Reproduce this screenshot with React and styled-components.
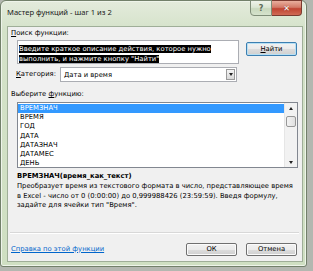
import styled, { createGlobalStyle } from 'styled-components';

const Global = createGlobalStyle`
  html, body {
    margin: 0;
    padding: 0;
    background: #b3b7b0;
  }
  body {
    font-family: "DejaVu Sans", Verdana, sans-serif;
    font-size: 6.8px;
    color: #000;
  }
`

const items = ['ВРЕМЗНАЧ', 'ВРЕМЯ', 'ГОД', 'ДАТА', 'ДАТАЗНАЧ', 'ДАТАМЕС', 'ДЕНЬ']

const App = () => {
  return (<>
    <Global />
    <Window>
      <TitleBar>
        <Title>Мастер функций - шаг 1 из 2</Title>
        <Caption>
          <CapButton>?</CapButton>
          <CapButton $close>✕</CapButton>
        </Caption>
      </TitleBar>
      <Client>
        <Label><u>П</u>оиск функции:</Label>
        <SearchRow>
          <SearchBox>
            <Sel>Введите краткое описание действия, которое нужно </Sel><br />
            <Sel>выполнить, и нажмите кнопку "Найти"</Sel>
          </SearchBox>
          <Button $focused $top={2}><u>Н</u>айти</Button>
        </SearchRow>
        <CategoryRow>
          <CatLabel><u>К</u>атегория:</CatLabel>
          <Select>
            <SelectText>Дата и время</SelectText>
            <DropBtn><Tri $down /></DropBtn>
          </Select>
        </CategoryRow>
        <Label $top={8}>Выберите <u>ф</u>ункцию:</Label>
        <ListBox>
          <Items>
            {items.map((it, i) => (
              <Item key={it} $selected={i === 0}>{it}</Item>
            ))}
          </Items>
          <Scroll>
            <ArrowBox><Tri /></ArrowBox>
            <Thumb />
            <Track />
            <ArrowBox><Tri $down /></ArrowBox>
          </Scroll>
        </ListBox>
        <Signature>ВРЕМЗНАЧ(время_как_текст)</Signature>
        <Desc>
          Преобразует время из текстового формата в число, представляющее время<br />
          в Excel - число от 0 (0:00:00) до 0,999988426 (23:59:59). Введя формулу,<br />
          задайте для ячейки тип "Время".
        </Desc>
        <Separator />
        <Footer>
          <HelpLink>Справка по этой функции</HelpLink>
          <Buttons>
            <Button>ОК</Button>
            <Button>Отмена</Button>
          </Buttons>
        </Footer>
      </Client>
    </Window>
  </>);
}

const Window = styled.div`
  width: 307px;
  height: 267px;
  box-sizing: border-box;
  border: 1px solid #72806a;
  border-radius: 6px 6px 3px 3px;
  background: linear-gradient(180deg, #e3ebdc 0px, #d4e2c9 30px, #cfdfc2 100%);
  padding: 0 3px 4px 6px;
  display: flex;
  flex-direction: column;
  box-shadow: inset 0 0 0 1px #eef4ea;
`
const TitleBar = styled.div`
  height: 25px;
  display: flex;
  justify-content: space-between;
  align-items: flex-start;
`
const Title = styled.div`
  font-family: "Noto Sans", "DejaVu Sans", sans-serif;
  font-size: 7.6px;
  line-height: 10px;
  padding-top: 6px;
  color: #1a1a1a;
`
const Caption = styled.div`
  display: flex;
  margin-right: 1px;
  margin-top: -1px;
`
const CapButton = styled.div`
  width: ${p => p.$close ? 30 : 22}px;
  height: 16px;
  box-sizing: border-box;
  border: 1px solid ${p => p.$close ? '#7a3a30' : '#7f8d78'};
  border-left-width: ${p => p.$close ? 0 : 1}px;
  border-radius: ${p => p.$close ? '0 0 4px 0' : '0 0 0 4px'};
  background: ${p => p.$close
    ? 'linear-gradient(180deg, #e9ae9d 0%, #d37a68 45%, #c04432 55%, #d06a55 100%)'
    : 'linear-gradient(180deg, #eef3ea 0%, #dbe6d3 45%, #c8d8bd 55%, #d6e3cd 100%)'};
  color: ${p => p.$close ? '#fff' : '#5d6a58'};
  font-size: 8px;
  font-weight: bold;
  display: flex;
  align-items: center;
  justify-content: center;
  text-shadow: ${p => p.$close ? '0 0 1px #6a2018' : 'none'};
`
const Client = styled.div`
  flex: 1;
  background: #f0f0f0;
  border: 1px solid #9fae98;
  display: flex;
  flex-direction: column;
`
const Label = styled.div`
  line-height: 9px;
  margin-top: ${p => p.$top ?? 2}px;
  padding-left: 3px;
  white-space: nowrap;
`
const SearchRow = styled.div`
  display: flex;
  gap: 7px;
  margin-top: 2px;
  margin-left: 9px;
  align-items: flex-start;
`
const SearchBox = styled.div`
  width: 222px;
  height: 24px;
  box-sizing: border-box;
  background: #fff;
  border: 1px solid #abadb3;
  padding: 3px 0 0 1px;
  line-height: 10px;
  white-space: nowrap;
  overflow: hidden;
`
const Sel = styled.span`
  background: #000;
  color: #fff;
`
const Button = styled.div`
  width: 51px;
  height: ${p => p.$focused ? 14 : 13}px;
  margin-top: ${p => p.$top ?? 0}px;
  box-sizing: border-box;
  border: 1px solid ${p => p.$focused ? '#3c7fb1' : '#707070'};
  border-radius: 2px;
  background: linear-gradient(180deg, #f2f2f2 0%, #ebebeb 50%, #dddddd 51%, #cfcfcf 100%);
  box-shadow: inset 0 0 0 1px ${p => p.$focused ? '#b8e0f4' : '#fbfbfb'};
  display: flex;
  align-items: center;
  justify-content: center;
  line-height: 9px;
`
const CategoryRow = styled.div`
  display: flex;
  align-items: center;
  margin-top: 3px;
  margin-left: 8px;
`
const CatLabel = styled.div`
  width: 44px;
  line-height: 9px;
`
const Select = styled.div`
  width: 177px;
  height: 15px;
  box-sizing: border-box;
  background: #fff;
  border: 1px solid #abadb3;
  display: flex;
  align-items: center;
  justify-content: space-between;
`
const SelectText = styled.div`
  padding-left: 3px;
`
const DropBtn = styled.div`
  width: 9px;
  height: 11px;
  margin-right: 1px;
  box-sizing: border-box;
  border: 1px solid #9a9a9a;
  background: linear-gradient(180deg, #f4f4f4, #d9d9d9);
  display: flex;
  align-items: center;
  justify-content: center;
`
const Tri = styled.div`
  width: 0;
  height: 0;
  border-left: 2.5px solid transparent;
  border-right: 2.5px solid transparent;
  ${p => p.$down ? 'border-top: 3px solid #222;' : 'border-bottom: 3px solid #222;'}
`
const ListBox = styled.div`
  margin-top: 3px;
  margin-left: 9px;
  width: 281px;
  height: 66px;
  box-sizing: border-box;
  border: 1px solid #828790;
  background: #fff;
  display: flex;
`
const Items = styled.div`
  flex: 1;
  padding-top: 1px;
  overflow: hidden;
`
const Item = styled.div`
  height: 9.2px;
  line-height: 9.2px;
  padding-left: 2px;
  background: ${p => p.$selected ? '#3399ff' : 'transparent'};
  color: ${p => p.$selected ? '#fff' : '#000'};
`
const Scroll = styled.div`
  width: 12px;
  background: #f2f2f2;
  border-left: 1px solid #e6e6e6;
  display: flex;
  flex-direction: column;
  align-items: center;
`
const ArrowBox = styled.div`
  height: 10px;
  width: 100%;
  display: flex;
  align-items: center;
  justify-content: center;
`
const Thumb = styled.div`
  width: 10px;
  height: 11px;
  margin-top: 3px;
  box-sizing: border-box;
  border: 1px solid #979797;
  border-radius: 2px;
  background: linear-gradient(90deg, #f3f3f3, #e0e0e0);
`
const Track = styled.div`
  flex: 1;
`
const Signature = styled.div`
  margin-top: 4px;
  margin-left: 9px;
  font-weight: bold;
  line-height: 9px;
`
const Desc = styled.div`
  margin-top: 1px;
  margin-left: 9px;
  line-height: 9.5px;
  white-space: nowrap;
`
const Separator = styled.div`
  margin: 21px 3px 0 2px;
  height: 1px;
  background: #d8d8d8;
  border-bottom: 1px solid #ffffff;
`
const Footer = styled.div`
  display: flex;
  align-items: center;
  justify-content: space-between;
  margin-top: 9px;
  padding-left: 3px;
  padding-right: 5px;
`
const HelpLink = styled.a`
  color: #0066cc;
  text-decoration: underline;
  line-height: 9px;
`
const Buttons = styled.div`
  display: flex;
  gap: 9px;
`

export default App
